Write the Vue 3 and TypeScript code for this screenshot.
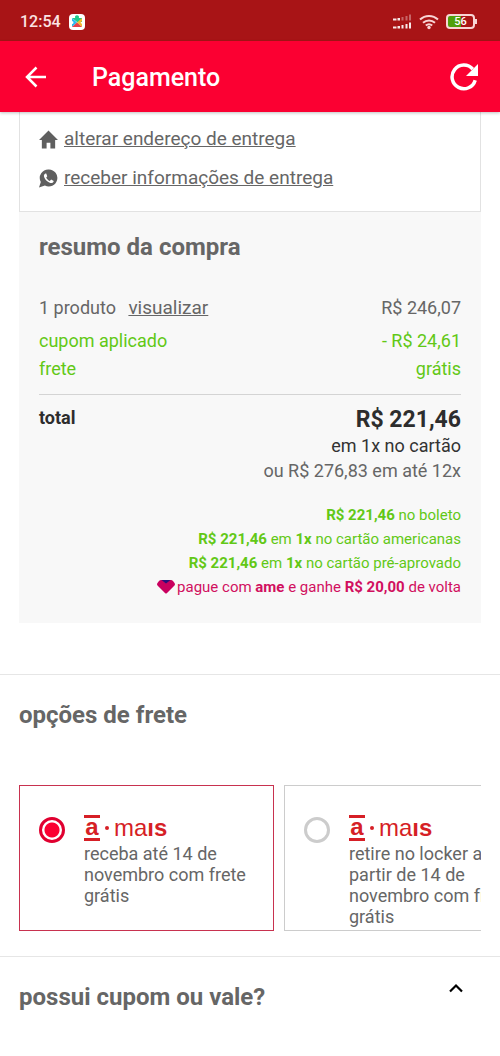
<script setup lang="ts">
import { ref } from 'vue'

interface SummaryRow {
  label: string
  value: string
  highlight: boolean
  link?: string
}

interface TextPart {
  text: string
  strong?: boolean
}

interface ShippingOption {
  id: string
  description: string
}

const rows: SummaryRow[] = [
  { label: '1 produto', value: 'R$ 246,07', highlight: false, link: 'visualizar' },
  { label: 'cupom aplicado', value: '- R$ 24,61', highlight: true },
  { label: 'frete', value: 'grátis', highlight: true },
]

const offers: TextPart[][] = [
  [{ text: 'R$ 221,46', strong: true }, { text: ' no boleto' }],
  [
    { text: 'R$ 221,46', strong: true },
    { text: ' em ' },
    { text: '1x', strong: true },
    { text: ' no cartão americanas' },
  ],
  [
    { text: 'R$ 221,46', strong: true },
    { text: ' em ' },
    { text: '1x', strong: true },
    { text: ' no cartão pré-aprovado' },
  ],
]

const shippingOptions: ShippingOption[] = [
  { id: 'entrega', description: 'receba até 14 de novembro com frete grátis' },
  { id: 'locker', description: 'retire no locker a partir de 14 de novembro com frete grátis' },
]

const selected = ref('entrega')
</script>

<template>
  <div class="screen">
    <div class="status">
      <span class="clock">12:54</span>
      <svg class="app-badge" width="16" height="16" viewBox="0 0 16 16" aria-hidden="true">
        <rect width="16" height="16" rx="4" fill="#fff" />
        <path d="M3 4h3.200a2 2 0 1 1 3.600 0H13v4L8 8z" fill="#1fc98a" />
        <path d="M3 4l5 4.500L3 13v-3a1.500 1.500 0 0 0 0-3z" fill="#28b8f0" />
        <path d="M13 4v3l-1.500 1.500L13 10v3L8 8.500z" fill="#f5b92e" />
        <path d="M3 13l5-4.500L13 13z" fill="#e5414a" />
      </svg>
      <div class="status-icons">
        <svg width="20" height="16" viewBox="0 0 20 16" fill="#fff" aria-hidden="true">
          <path d="M1 4.500h3.500v2H1zM5.500 4h2.500v2.500H5.500z" opacity=".9" />
          <path d="M9.500 3h2v3.500h-2zM13.500 2h2v4.500h-2zM17 .5h2v6h-2z" opacity=".35" />
          <path d="M1 12.500h3.500v2H1zM5.500 12h2.500v2.500H5.500zM9.500 11h2v3.500h-2zM13.500 10h2v4.500h-2zM17 8.500h2v6h-2z" opacity=".9" />
        </svg>
        <svg width="20" height="16" viewBox="0 0 20 16" fill="none" stroke="#f9d5d5" stroke-width="2" aria-hidden="true">
          <path d="M1 5.500a13 13 0 0 1 18 0M4 8.800a9 9 0 0 1 12 0M6.800 11.600a5 5 0 0 1 6.400 0" />
          <circle cx="10" cy="13.500" r="1.700" fill="#f9d5d5" stroke="none" />
        </svg>
        <div class="battery"><span>56</span></div>
      </div>
    </div>

    <header class="app-bar">
      <button type="button" class="icon-button" aria-label="voltar">
        <svg width="22" height="22" viewBox="0 0 22 22" fill="none" stroke="#fff" stroke-width="2.500" aria-hidden="true">
          <path d="M21 11H2.500M11.500 1.500L2 11l9.500 9.500" />
        </svg>
      </button>
      <h1>Pagamento</h1>
      <button type="button" class="icon-button" aria-label="atualizar">
        <svg width="28" height="28" viewBox="0 0 28 28" aria-hidden="true">
          <path d="M25.200 17.200A11.800 11.800 0 1 1 22.800 6.200" fill="none" stroke="#fff" stroke-width="3.500" />
          <path d="M28 1v12H16z" fill="#fff" />
        </svg>
      </button>
    </header>

    <main>
      <div class="order">
        <nav class="delivery">
          <div class="delivery-item">
            <svg width="19" height="20" viewBox="0 0 20 20" fill="#5f5f5f" aria-hidden="true">
              <path d="M10 1L0 11h3v9h5v-6h4v6h5v-9h3z" />
            </svg>
            <a href="#endereco">alterar endereço de entrega</a>
          </div>
          <div class="delivery-item">
            <svg width="19" height="20" viewBox="0 0 20 20" aria-hidden="true">
              <path d="M10.500 1a9 9 0 1 1-4.300 17L0 20l1.900-5.800A9 9 0 0 1 10.500 1z" fill="#5f5f5f" />
              <path d="M6.800 5.200c-1.600.7-2 2.300-1.300 4 1.200 2.900 3.400 5 6.400 6 1.800.5 3.200-.2 3.600-2l-2.700-1.600-1.500 1.500c-1.600-.7-3-2-3.700-3.700l1.100-1.300-1.100-2.900z" fill="#fff" />
            </svg>
            <a href="#informacoes">receber informações de entrega</a>
          </div>
        </nav>

        <section class="summary">
          <h2>resumo da compra</h2>
          <dl class="rows">
            <div v-for="row in rows" :key="row.label" class="row" :class="{ green: row.highlight }">
              <dt>
                {{ row.label }}
                <a v-if="row.link" href="#produtos">{{ row.link }}</a>
              </dt>
              <dd>{{ row.value }}</dd>
            </div>
          </dl>
          <div class="total">
            <strong class="total-label">total</strong>
            <div class="total-values">
              <strong class="price">R$ 221,46</strong>
              <span class="cash">em 1x no cartão</span>
              <span class="installments">ou R$ 276,83 em até 12x</span>
            </div>
          </div>
          <ul class="offers">
            <li v-for="(offer, index) in offers" :key="index">
              <component :is="part.strong ? 'b' : 'span'" v-for="(part, i) in offer" :key="i">{{ part.text }}</component>
            </li>
            <li class="ame">
              <svg width="18" height="14" viewBox="0 0 18 14" aria-hidden="true">
                <path d="M4 0h10q1 0 2 1l1.500 2q1 1.300 0 2.500L10 13q-1 1-2 0L.5 5.500q-1-1.200 0-2.500L2 1q1-1 2-1z" fill="#c9005f" />
                <path d="M4.500 0h9L9 3.500z" fill="#28107a" />
              </svg>
              <span>pague com <b>ame</b> e ganhe <b>R$ 20,00</b> de volta</span>
            </li>
          </ul>
        </section>
      </div>

      <section class="shipping">
        <h2 id="frete">opções de frete</h2>
        <div class="cards" role="radiogroup" aria-labelledby="frete">
          <label
            v-for="option in shippingOptions"
            :key="option.id"
            class="card"
            :class="{ active: selected === option.id }"
          >
            <input v-model="selected" type="radio" name="frete" :value="option.id" />
            <span class="card-body">
              <span class="brand"><b class="brand-a">a</b><i class="brand-dot"></i><span>ma<b>ıs</b></span></span>
              <span>{{ option.description }}</span>
            </span>
          </label>
        </div>
      </section>

      <section class="coupon">
        <h2>possui cupom ou vale?</h2>
        <button type="button" class="toggle" aria-label="abrir cupom ou vale">
          <svg width="14" height="10" viewBox="0 0 14 10" fill="none" stroke="#000" stroke-width="2.200" aria-hidden="true">
            <path d="M1 8.500l6-6 6 6" />
          </svg>
        </button>
      </section>
    </main>
  </div>
</template>

<style>
body {
  margin: 0;
  background: #fff;
}
</style>

<style scoped>
.screen {
  font-family: Roboto, "Liberation Sans", sans-serif;
  font-size: 18px;
  color: #666;
  background: #fff;
  min-height: 100vh;
}

h1,
h2,
dl,
dd,
ul {
  margin: 0;
  padding: 0;
}

button {
  border: 0;
  padding: 0;
  background: none;
  display: flex;
}

a {
  color: inherit;
  text-decoration: underline;
}

b,
strong {
  font-weight: 700;
}

h2 {
  font-size: 24px;
  line-height: 32px;
  font-weight: 700;
}

.status {
  display: flex;
  align-items: center;
  gap: 8px;
  height: 41px;
  padding: 2px 25px 0 20px;
  box-sizing: border-box;
  background: #a81416;
  color: #fbe3e3;
}

.clock {
  font-size: 16px;
  font-weight: 500;
}

.status-icons {
  display: flex;
  align-items: center;
  gap: 7px;
  margin-left: auto;
}

.battery {
  position: relative;
  width: 29px;
  height: 15px;
  box-sizing: border-box;
  border: 2px solid #f9d5d5;
  border-radius: 4px;
  background: linear-gradient(90deg, #4f9f0c 54%, transparent 54%);
  color: #fff;
  font-size: 11px;
  line-height: 12px;
  font-weight: 500;
  text-align: center;
}

.battery::after {
  content: "";
  position: absolute;
  right: -4px;
  top: 3px;
  width: 2px;
  height: 5px;
  background: #f9d5d5;
}

.app-bar {
  position: relative;
  display: flex;
  align-items: center;
  height: 71px;
  padding: 0 22px 0 25px;
  box-sizing: border-box;
  background: #fb0032;
  color: #fff;
  box-shadow: 0 1px 3px rgba(0, 0, 0, 0.25);
}

h1 {
  flex: 1;
  margin-left: 45px;
  padding-top: 2px;
  font-size: 25px;
  line-height: 32px;
  font-weight: 500;
}

.order {
  padding: 0 19px 51px;
}

.delivery {
  display: flex;
  flex-direction: column;
  gap: 7px;
  padding: 11px 20px 17px 19px;
  border: 1px solid #e2e2e2;
  border-top: 0;
}

.delivery-item {
  display: flex;
  align-items: center;
  gap: 6px;
  font-size: 19px;
  line-height: 32px;
}

.summary {
  padding: 19px 20px 24px;
  background: #f8f8f8;
}

.rows {
  padding: 31px 0 11px;
  border-bottom: 1px solid #d4d4d4;
}

.row {
  display: flex;
  justify-content: space-between;
  line-height: 28px;
}

.row:first-child {
  margin-bottom: 5px;
}

dt a {
  display: inline-block;
  margin-left: 8px;
  font-size: 19px;
}

.green {
  color: #62c816;
}

.total {
  display: flex;
  justify-content: space-between;
  padding-top: 11px;
}

.total-label {
  line-height: 24px;
  color: #2d2d2d;
}

.total-values {
  display: flex;
  flex-direction: column;
  text-align: right;
  line-height: 26px;
}

.price {
  font-size: 23px;
  line-height: 28px;
  color: #2d2d2d;
}

.cash {
  line-height: 24px;
  color: #333;
}

.offers {
  padding-top: 19px;
  list-style: none;
  font-size: 15px;
  line-height: 24px;
  text-align: right;
  color: #62c816;
}

.offers li {
  white-space: pre-wrap;
}

.ame {
  display: flex;
  justify-content: flex-end;
  align-items: center;
  gap: 2px;
  color: #d1105f;
}

.shipping {
  padding: 24px 19px 25px;
  border-top: 1px solid #e6e6e6;
}

.cards {
  display: flex;
  gap: 10px;
  margin-top: 54px;
  overflow: hidden;
}

.card {
  display: flex;
  align-items: flex-start;
  gap: 19px;
  flex: 0 0 255px;
  box-sizing: border-box;
  padding: 29px 19px 3px;
  border: 1px solid #ccc;
  line-height: 21px;
}

.card.active {
  border-color: #c8324f;
}

.card input {
  appearance: none;
  flex: none;
  width: 26px;
  height: 26px;
  margin: 2px 0 0;
  border: 3px solid #ccc;
  border-radius: 50%;
}

.card input:checked {
  border-color: #e00030;
  background: radial-gradient(circle, #fb0032 7px, #fff 8px);
}

.card-body {
  display: flex;
  flex-direction: column;
  gap: 2px;
}

.brand {
  display: flex;
  align-items: center;
  height: 26px;
  font-family: "Liberation Sans", Arial, sans-serif;
  font-size: 24px;
  line-height: 18px;
  color: #d61f26;
}

.brand-a {
  width: 16px;
  height: 26px;
  box-sizing: border-box;
  border-top: 3px solid;
  border-bottom: 3px solid;
  text-align: center;
}

.brand-dot {
  width: 4px;
  height: 4px;
  margin: 0 5px;
  border-radius: 50%;
  background: currentColor;
}

.coupon {
  display: flex;
  justify-content: space-between;
  align-items: flex-start;
  padding: 24px 37px 43px 19px;
  border-top: 1px solid #e6e6e6;
}

.toggle {
  padding-top: 2px;
}
</style>
